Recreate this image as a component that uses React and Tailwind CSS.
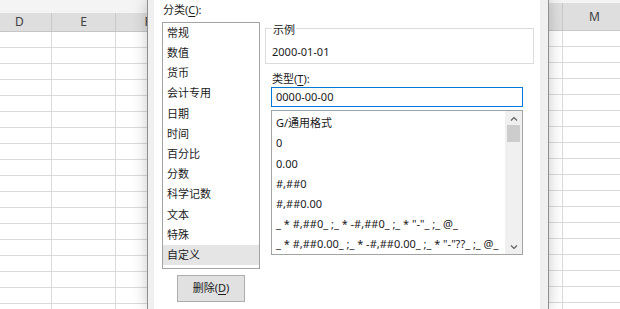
import React from "react";

const FONT = { fontFamily: '"Noto Sans", "Noto Sans CJK SC", sans-serif' };

const categories = ["常规", "数值", "货币", "会计专用", "日期", "时间", "百分比", "分数", "科学记数", "文本", "特殊", "自定义"];

const formats = [
  "G/通用格式",
  "0",
  "0.00",
  "#,##0",
  "#,##0.00",
  '_ * #,##0_ ;_ * -#,##0_ ;_ * "-"_ ;_ @_',
  '_ * #,##0.00_ ;_ * -#,##0.00_ ;_ * "-"??_ ;_ @_',
];

const Sheet = ({ cols, shift, topH, headH }) => (
  <div className="h-full overflow-hidden bg-white">
    <div className="bg-[#f4f4f4]" style={{ height: topH }} />
    <div className="flex" style={{ marginLeft: -shift }}>
      {cols.map((c, ci) => (
        <div key={ci} className="w-[64px] shrink-0">
          <div
            className="flex items-center justify-center border-r border-b border-r-[#c9c9c9] border-b-[#c6c6c6] bg-[#dedede] text-[12px] text-[#404040]"
            style={{ height: headH }}
          >
            {c}
          </div>
          {Array.from({ length: 18 }).map((_, i) => (
            <div key={i} className="h-[16px] border-r border-b border-[#dadada]" />
          ))}
        </div>
      ))}
    </div>
  </div>
);

const Chevron = ({ up }) => (
  <svg width="8" height="5" viewBox="0 0 8 5">
    <polyline
      points={up ? "1,4.5 4,1.5 7,4.5" : "1,0.5 4,3.5 7,0.5"}
      fill="none"
      stroke="#606060"
      strokeWidth="1.2"
    />
  </svg>
);

const Key = ({ children }) => <span className="underline underline-offset-2">{children}</span>;

export default function App() {
  return (
    <div className="flex h-[309px] w-[620px] overflow-hidden bg-white text-[11px] text-[#1a1a1a]" style={FONT}>
      <div className="w-[147px] shrink-0">
        <Sheet cols={["D", "E", "F"]} shift={12} topH={13} headH={19} />
      </div>

      <div className="relative z-10 flex w-[402px] shrink-0 border-x border-[#8f8f8f] bg-[#f0f0f0] pl-[6px] pr-[8px] shadow-[0_0_14px_rgba(0,0,0,0.22)]">
        <div className="flex flex-1 gap-[5px] bg-white pl-[8px] pr-[6px]">
          <div className="flex w-[98px] shrink-0 flex-col pt-[2px]">
            <div className="mb-[5px] h-[15px] pl-[1px] leading-[15px]">
              分类(<Key>C</Key>):
            </div>
            <div className="h-[247px] border border-[#a3a3a3]">
              {categories.map((c, i) => (
                <div
                  key={c}
                  className={`flex h-[20.2px] items-center pl-[4px] ${i === categories.length - 1 ? "bg-[#e5e5e5]" : ""}`}
                >
                  {c}
                </div>
              ))}
            </div>
            <button className="ml-[15px] mt-[6px] flex h-[27px] w-[68px] items-center justify-center border border-[#adadad] bg-[#e1e1e1] text-[11px]">
              删除(<Key>D</Key>)
            </button>
          </div>

          <div className="flex w-[269px] shrink-0 flex-col pt-[28px]">
            <div className="h-[36px] border border-[#dcdcdc]">
              <div className="-mt-[7.5px] ml-[6px] w-fit bg-white px-[1px] leading-[15px]">示例</div>
              <div className="mt-[7px] pl-[6px] leading-[15px]">2000-01-01</div>
            </div>
            <div className="ml-[7px] mt-[6.5px] leading-[15px]">
              类型(<Key>T</Key>):
            </div>
            <div className="ml-[6px] mt-[1.5px] flex h-[20px] w-[252px] items-center border border-[#0078d7] pl-[4px]">
              0000-00-00
            </div>
            <div className="ml-[6px] mt-[3px] flex h-[145px] w-[252px] border border-[#a3a3a3]">
              <div className="flex-1 overflow-hidden pl-[4px] pt-[2.4px]">
                {formats.map((f) => (
                  <div key={f} className="flex h-[20.2px] items-center whitespace-pre">
                    {f}
                  </div>
                ))}
              </div>
              <div className="flex w-[17px] shrink-0 flex-col bg-[#f0f0f0]">
                <div className="flex h-[14px] items-center justify-center">
                  <Chevron up />
                </div>
                <div className="mx-[2px] h-[17px] bg-[#cdcdcd]" />
                <div className="flex-1" />
                <div className="flex h-[14px] items-center justify-center">
                  <Chevron />
                </div>
              </div>
            </div>
          </div>
        </div>
      </div>

      <div className="flex-1">
        <Sheet cols={["", "M"]} shift={50} topH={3} headH={28} />
      </div>
    </div>
  );
}
